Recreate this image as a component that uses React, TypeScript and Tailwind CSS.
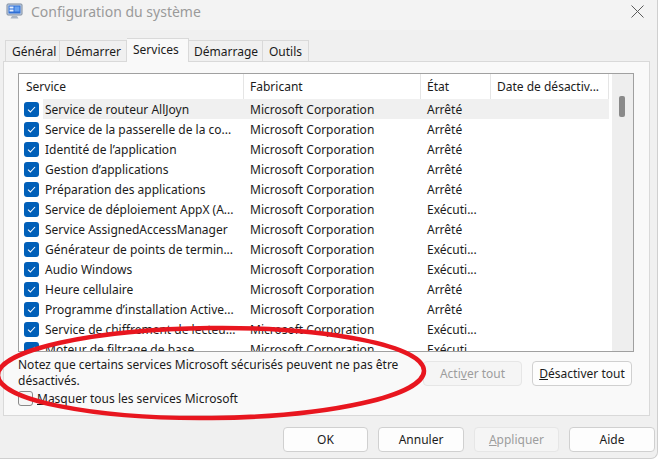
const rows: [string, string][] = [
  ["Service de routeur AllJoyn", "Arrêté"],
  ["Service de la passerelle de la co...", "Arrêté"],
  ["Identité de l’application", "Arrêté"],
  ["Gestion d’applications", "Arrêté"],
  ["Préparation des applications", "Arrêté"],
  ["Service de déploiement AppX (A...", "Exécuti..."],
  ["Service AssignedAccessManager", "Arrêté"],
  ["Générateur de points de termin...", "Exécuti..."],
  ["Audio Windows", "Exécuti..."],
  ["Heure cellulaire", "Arrêté"],
  ["Programme d’installation Active...", "Arrêté"],
  ["Service de chiffrement de lecteu...", "Exécuti..."],
  ["Moteur de filtrage de base", "Exécuti..."],
];

function Check() {
  return (
    <div className="w-[15px] h-[15px] rounded-[3px] bg-[#005fb8] flex items-center justify-center">
      <svg width="9" height="7" viewBox="0 0 9 7">
        <path d="M1 3.6 L3.4 6 L8 1" fill="none" stroke="white" strokeWidth="1.1" />
      </svg>
    </div>
  );
}

function AppIcon() {
  return (
    <svg width="17" height="17" viewBox="0 0 17 17">
      <rect x="1" y="1" width="15" height="11" rx="1" fill="#c9d3e0" stroke="#7d8ba0" />
      <rect x="2.5" y="2.5" width="12" height="8" fill="#2f6fd6" />
      <rect x="3.5" y="3.5" width="4" height="2" fill="#e6f0ff" />
      <rect x="3.5" y="6.5" width="4" height="2" fill="#e6f0ff" />
      <rect x="8.5" y="3.5" width="5" height="5" fill="#6aa3f0" />
      <path d="M6 13 L11 13 L12.5 15.5 L4.5 15.5 Z" fill="#a9b4c3" />
    </svg>
  );
}

function Btn({ label, u, rest, disabled, w }: { label?: string; u?: string; rest?: string; disabled?: boolean; w: string }) {
  return (
    <div
      className={`${w} h-[25px] rounded-[4px] border flex items-center justify-center pt-[1px] text-[12px] ${
        disabled ? "border-[#e6e6e6] bg-[#f5f5f5] text-[#9d9d9d]" : "border-[#d0d0d0] bg-[#fdfdfd] text-[#1b1b1b]"
      }`}
    >
      {label}
      {u !== undefined && (
        <>
          {rest?.split("|")[0]}
          <span className="underline">{u}</span>
          {rest?.split("|")[1]}
        </>
      )}
    </div>
  );
}

export default function App() {
  return (
    <div className="w-[661px] h-[464px] bg-white relative overflow-hidden font-['Noto_Sans',sans-serif] text-[#1b1b1b]">
      <div className="w-[658px] h-[459px] bg-[#f0f0f0] border-r border-b border-[#cfcfcf] rounded-br-[7px] flex flex-col">
        {/* title bar */}
        <div className="h-[30px] bg-[#f3f3f3] flex items-start pt-[3px] pl-[6px] shrink-0">
          <AppIcon />
          <span className="ml-[8px] text-[14px] leading-[18px] text-[#9a9a9a]">Configuration du système</span>
          <div className="ml-auto mr-[13px] mt-[2px]">
            <svg width="13" height="13" viewBox="0 0 13 13">
              <path d="M0.5 0.5 L12.5 12.5 M12.5 0.5 L0.5 12.5" stroke="#5a5a5a" strokeWidth="1" />
            </svg>
          </div>
        </div>

        {/* tabs */}
        <div className="flex items-end pl-[5px] h-[31px] shrink-0 text-[12px]">
          <div className="h-[21px] w-[55px] pl-[6px] pt-[1px] border border-b-0 border-[#d9d9d9] flex items-center">Général</div>
          <div className="h-[21px] w-[67px] pl-[6px] pt-[1px] border border-l-0 border-b-0 border-[#d9d9d9] flex items-center">Démarrer</div>
          <div className="h-[24px] w-[62px] pl-[6px] border border-l-0 border-b-0 border-[#d9d9d9] bg-[#f9f9f9] flex items-start pt-[2px] -mb-px relative z-10">
            Services
          </div>
          <div className="h-[21px] w-[74px] pl-[5px] pt-[1px] border border-l-0 border-b-0 border-[#d9d9d9] flex items-center">Démarrage</div>
          <div className="h-[21px] w-[46px] pl-[6px] pt-[1px] border border-l-0 border-b-0 border-[#d9d9d9] flex items-center">Outils</div>
        </div>

        {/* panel */}
        <div className="ml-[3px] w-[647px] h-[355px] border border-[#d9d9d9] bg-[#f9f9f9] shrink-0 pl-[14px] pt-[11px] text-[12px]">
          <div className="w-[616px] h-[279px] border border-[#a0a0a0] bg-white flex overflow-hidden">
            <div className="w-[593px] h-[277px] flex flex-col overflow-hidden">
              <div className="h-[25px] flex shrink-0">
                <div className="w-[225px] pl-[7px] pt-[1px] flex items-center border-r border-[#e5e5e5]">Service</div>
                <div className="w-[177px] pl-[6px] pt-[1px] flex items-center border-r border-[#e5e5e5]">Fabricant</div>
                <div className="w-[70px] pl-[6px] pt-[1px] flex items-center border-r border-[#e5e5e5]">État</div>
                <div className="w-[118px] pl-[6px] pt-[1px] flex items-center border-r border-[#e5e5e5]">Date de désactiv...</div>
              </div>
              {rows.map(([name, state], i) => (
                <div key={i} className="h-[20px] flex shrink-0">
                  <div className="w-[24px] pl-[5px] flex items-center">
                    <Check />
                  </div>
                  <div className={`w-[566px] flex pt-[1px] ${i === 0 ? "bg-[#f0f0f0]" : ""}`}>
                    <div className="w-[201px] pl-[2px] flex items-center whitespace-nowrap overflow-hidden">{name}</div>
                    <div className="w-[177px] pl-[6px] flex items-center whitespace-nowrap">Microsoft Corporation</div>
                    <div className="w-[70px] pl-[6px] flex items-center whitespace-nowrap">{state}</div>
                  </div>
                </div>
              ))}
            </div>
            <div className="w-[21px] bg-[#eeeeee] pl-[7px] pt-[22px]">
              <div className="w-[6px] h-[21px] bg-[#8a8a8a] rounded-[2px]" />
            </div>
          </div>

          <div className="flex mt-[3px]">
            <div className="w-[405px] pt-[2px]">
              <div className="leading-[16px]">
                Notez que certains services Microsoft sécurisés peuvent ne pas être
                <br />
                désactivés.
              </div>
              <div className="flex items-center mt-[2px] h-[15px]">
                <div className="w-[15px] h-[15px] rounded-[3px] border border-[#8a8a8a] bg-[#f6f6f6]" />
                <span className="ml-[4px] pt-[1px]">
                  <span className="underline">M</span>asquer tous les services Microsoft
                </span>
              </div>
            </div>
            <div className="flex gap-[10px] pt-[6px]">
              <Btn w="w-[99px]" disabled u="v" rest="Acti|er tout" />
              <Btn w="w-[100px]" u="D" rest="|ésactiver tout" />
            </div>
          </div>
        </div>

        {/* bottom buttons */}
        <div className="flex gap-[10px] pl-[283px] mt-[11px] text-[12px]">
          <Btn w="w-[85px]" label="OK" />
          <Btn w="w-[86px]" label="Annuler" />
          <Btn w="w-[85px]" disabled u="A" rest="|ppliquer" />
          <Btn w="w-[86px]" label="Aide" />
        </div>
      </div>

      <svg className="absolute left-0 top-0 pointer-events-none" width="661" height="464" viewBox="0 0 661 464">
        <ellipse cx="211" cy="373" rx="213" ry="45" fill="none" stroke="#e8161f" strokeWidth="4.5" transform="rotate(-0.6 211 373)" />
      </svg>
    </div>
  );
}
